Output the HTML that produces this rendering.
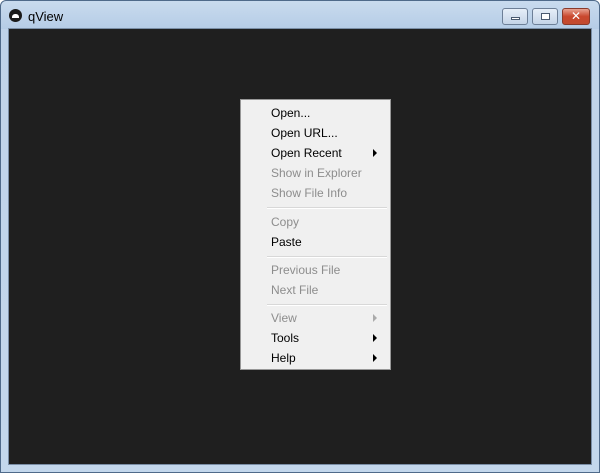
<!DOCTYPE html>
<html><head><style>
body{margin:0;width:600px;height:473px;overflow:hidden;font-family:"Liberation Sans","DejaVu Sans",sans-serif;}
.win{position:absolute;left:0;top:0;width:598px;height:471px;border:1px solid #4f6a8a;border-radius:6px 6px 0 0;background:linear-gradient(#c9dbee 0,#b5cce6 28px,#bfd3ea 28px,#c3d7ec 100%);}
.title{position:absolute;left:27px;top:8px;font-size:13px;color:#000;}
.icon{position:absolute;left:8px;top:8px;width:13px;height:13px;border-radius:50%;background:#1a1a1a;}
.icon:after{content:"";position:absolute;left:3px;top:5px;width:7px;height:4px;background:#fff;border-radius:3px 3px 0 0;}
.content{position:absolute;left:7px;top:27px;width:584px;height:437px;background:#1f1f1f;border:1px solid #7a8ea6;box-sizing:border-box;}
.btn{position:absolute;top:7px;height:17px;border:1px solid #6d7f97;border-radius:3px;background:linear-gradient(#e6eef8,#c5d4e7);box-sizing:border-box;}
.close{background:linear-gradient(#e8a291,#c9472d 50%,#c24a2f);border-color:#8a3a2b;}
.menu{position:absolute;left:240px;top:99px;width:151px;height:271px;background:#f0f0f0;border:1px solid #979797;box-sizing:border-box;font-size:12px;}
.it{position:absolute;left:30px;height:20px;line-height:20px;color:#000;}
.d{color:#8d8d8d;}
.sep{position:absolute;left:26px;right:3px;height:1px;background:#d8d8d8;border-bottom:1px solid #fff;}
.ar{position:absolute;right:13px;width:0;height:0;border-left:4px solid #000;border-top:4px solid transparent;border-bottom:4px solid transparent;}
</style></head><body>
<div class="win">
<div class="icon"></div>
<div class="title">qView</div>
<div class="btn" style="left:501px;width:26px"><div style="position:absolute;left:8px;top:8px;width:9px;height:3px;background:#fff;border:1px solid #4a5a70;box-sizing:border-box"></div></div>
<div class="btn" style="left:531px;width:26px"><div style="position:absolute;left:8px;top:4px;width:9px;height:7px;border:1px solid #4a5a70;background:#fff;box-sizing:border-box"></div></div>
<div class="btn close" style="left:561px;width:28px;color:#fff;font-weight:bold;font-size:12px;text-align:center;line-height:14px">✕</div>
<div class="content"></div>
</div>
<div class="menu">
<div class="it" style="top:3px">Open...</div>
<div class="it" style="top:23px">Open URL...</div>
<div class="it" style="top:43px">Open Recent</div><div class="ar" style="top:49px"></div>
<div class="it d" style="top:63px">Show in Explorer</div>
<div class="it d" style="top:83px">Show File Info</div>
<div class="sep" style="top:107px"></div>
<div class="it d" style="top:112px">Copy</div>
<div class="it" style="top:132px">Paste</div>
<div class="sep" style="top:156px"></div>
<div class="it d" style="top:160px">Previous File</div>
<div class="it d" style="top:180px">Next File</div>
<div class="sep" style="top:204px"></div>
<div class="it d" style="top:208px">View</div><div class="ar" style="top:214px;border-left-color:#aaa"></div>
<div class="it" style="top:228px">Tools</div><div class="ar" style="top:234px"></div>
<div class="it" style="top:248px">Help</div><div class="ar" style="top:254px"></div>
</div>
</body></html>
